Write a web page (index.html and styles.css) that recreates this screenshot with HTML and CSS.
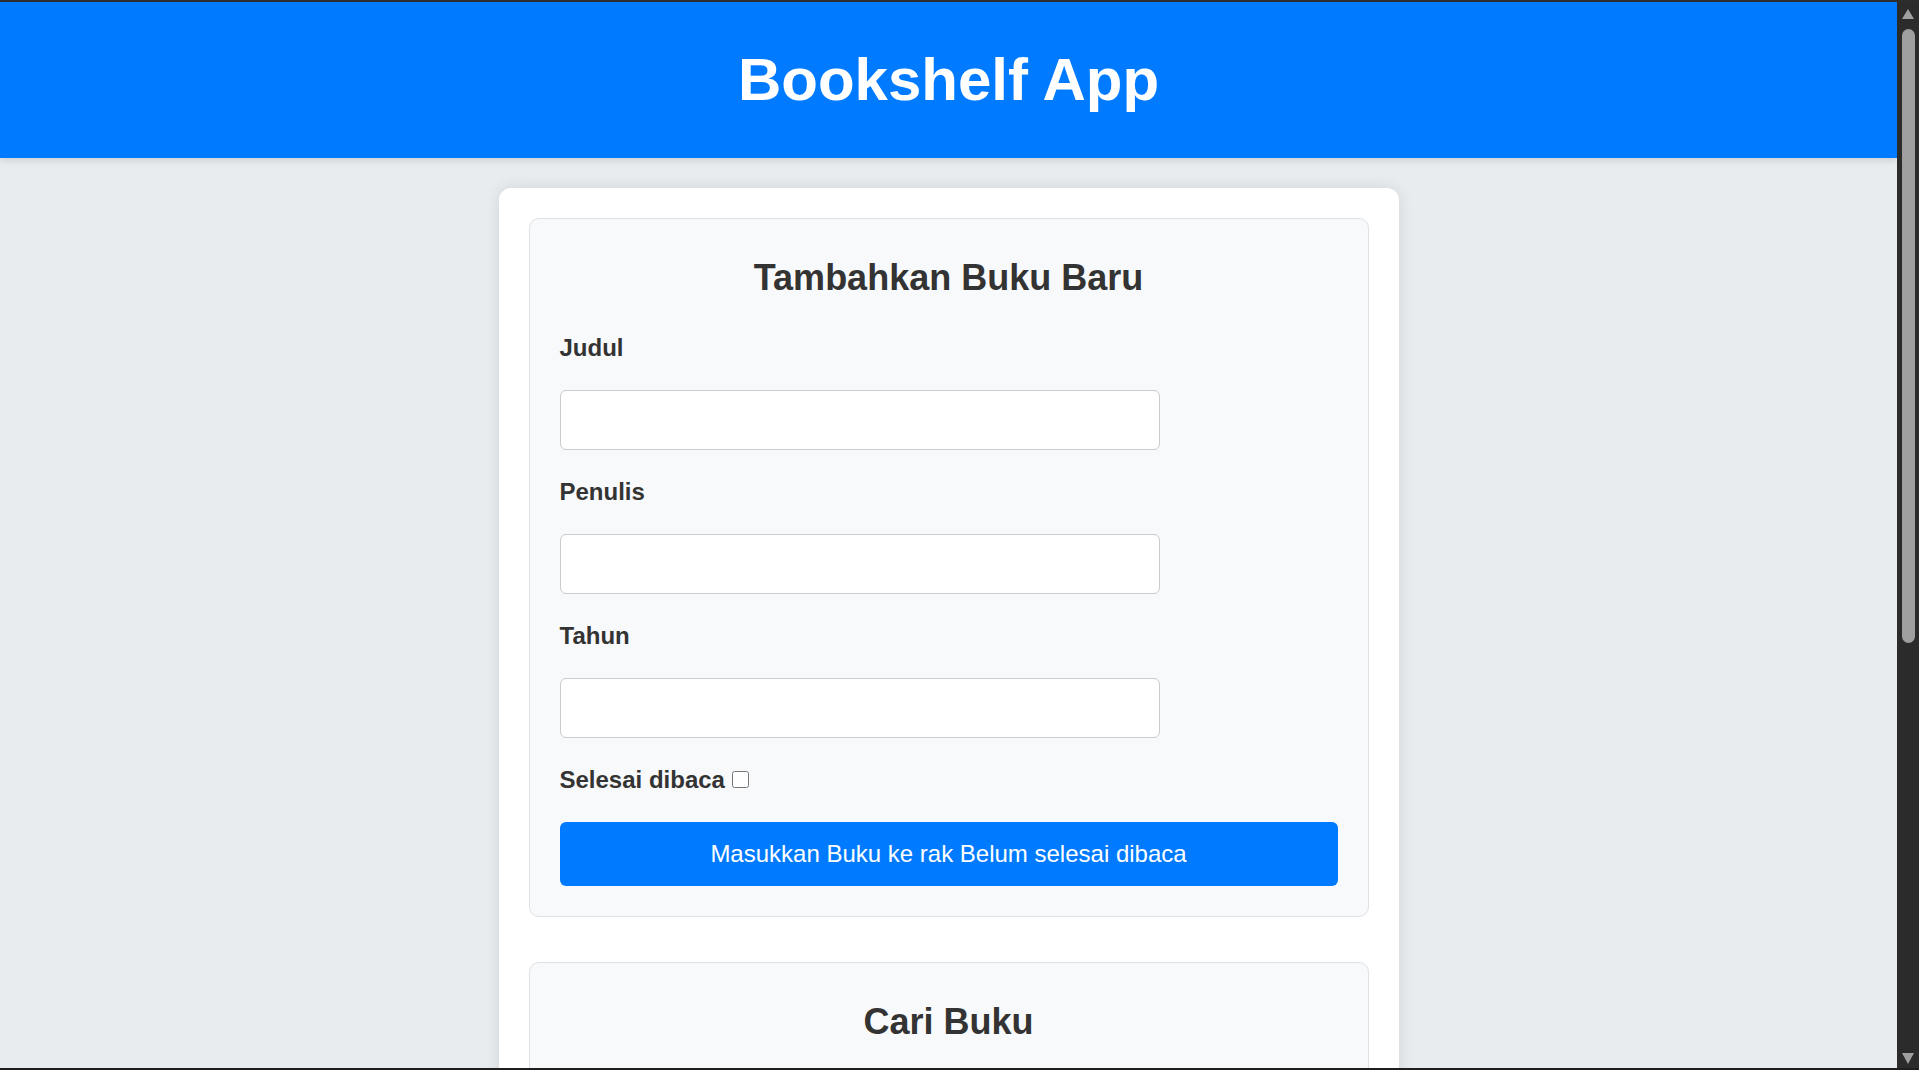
FILE: index.html
```html
<!DOCTYPE html>
<html lang="id">
<head>
<meta charset="utf-8">
<title>Bookshelf App</title>
<link rel="stylesheet" href="styles.css">
</head>
<body>
<div class="page">
  <header class="app-header">
    <h1 class="app-title">Bookshelf App</h1>
  </header>
  <main class="main">
    <div class="card">
      <section class="panel">
        <h2 class="panel-title">Tambahkan Buku Baru</h2>
        <form class="book-form">
          <div class="field">
            <label class="field-label" for="bookFormTitle">Judul</label>
            <input class="field-input" id="bookFormTitle" type="text">
          </div>
          <div class="field">
            <label class="field-label" for="bookFormAuthor">Penulis</label>
            <input class="field-input" id="bookFormAuthor" type="text">
          </div>
          <div class="field">
            <label class="field-label" for="bookFormYear">Tahun</label>
            <input class="field-input" id="bookFormYear" type="number">
          </div>
          <div class="field field-check">
            <label class="check-label" for="bookFormIsComplete">Selesai dibaca</label><input class="check-input" id="bookFormIsComplete" type="checkbox">
          </div>
          <button class="btn" type="submit">Masukkan Buku ke rak <span>Belum selesai dibaca</span></button>
        </form>
      </section>

      <section class="panel">
        <h2 class="panel-title">Cari Buku</h2>
        <form class="search-form">
          <div class="field">
            <label class="field-label" for="searchBookTitle">Judul</label>
            <input class="field-input" id="searchBookTitle" type="text">
          </div>
          <button class="btn" type="submit">Cari</button>
        </form>
      </section>

      <section class="panel">
        <h2 class="panel-title">Belum selesai dibaca</h2>
        <div class="book-list"></div>
      </section>

      <section class="panel">
        <h2 class="panel-title">Selesai dibaca</h2>
        <div class="book-list"></div>
      </section>
    </div>
  </main>
</div>
<div class="scrollbar" aria-hidden="true">
  <span class="sb-arrow sb-up"></span>
  <span class="sb-thumb"></span>
  <span class="sb-spacer"></span>
  <span class="sb-arrow sb-down"></span>
</div>
</body>
</html>
```

FILE: styles.css
```css
html {
  height: 100%;
  background: #2b2b2b;
}

body {
  margin: 0;
  height: 100vh;
  box-sizing: border-box;
  border-top: 2px solid #2d2d2d;
  border-bottom: 2px solid #1f1f1f;
  display: flex;
  overflow: hidden;
  color: #333;
  font-family: "Liberation Sans", Arial, sans-serif;
}

.page {
  flex: 1;
  min-width: 0;
  overflow-y: auto;
  scrollbar-width: none;
  background: #e9ecef;
}

.page::-webkit-scrollbar {
  display: none;
}

/* scrollbar column as seen in the screenshot */
.scrollbar {
  width: 22px;
  flex: none;
  box-sizing: border-box;
  padding: 7px 4px 4px 5px;
  background: #2b2b2b;
  display: flex;
  flex-direction: column;
}

.sb-arrow {
  display: block;
  width: 0;
  height: 0;
  border-left: 6.5px solid transparent;
  border-right: 6.5px solid transparent;
}

.sb-up {
  border-bottom: 10px solid #9f9f9f;
}

.sb-down {
  border-top: 11px solid #9f9f9f;
}

.sb-thumb {
  display: block;
  height: 614px;
  margin-top: 10px;
  border-radius: 6.5px;
  background: #9f9f9f;
}

.sb-spacer {
  flex: 1;
}

.app-header {
  background: #007bff;
  color: #fff;
  text-align: center;
  padding: 43px 0 44px;
  box-shadow: 0 3px 6px rgba(0, 0, 0, 0.1);
  position: relative;
}

.app-title {
  margin: 0;
  font-size: 60px;
  line-height: 69px;
  font-weight: 700;
}

.main {
  padding: 30px 0;
}

.card {
  width: 900px;
  box-sizing: border-box;
  margin: 0 auto;
  padding: 30px;
  background: #fff;
  border-radius: 12px;
  box-shadow: 0 0 15px rgba(0, 0, 0, 0.1);
}

.panel {
  background: #f8f9fa;
  border: 1px solid #dee2e6;
  border-radius: 10px;
  padding: 30px;
  margin-bottom: 45px;
}

.panel:last-child {
  margin-bottom: 0;
}

.panel-title {
  margin: 7.5px 0 35.5px;
  font-size: 36px;
  line-height: 42px;
  font-weight: 700;
  text-align: center;
}

.field {
  margin-bottom: 28px;
}

.field-label {
  display: block;
  font-size: 24px;
  line-height: 28px;
  font-weight: 700;
  margin-bottom: 28px;
}

.field-input {
  display: block;
  box-sizing: border-box;
  width: 600px;
  height: 60px;
  margin: 0;
  padding: 0 15px;
  border: 1px solid #ccc;
  border-radius: 6px;
  background: #fff;
  font-family: "Liberation Sans", Arial, sans-serif;
  font-size: 24px;
}

.field-check {
  font-size: 24px;
  line-height: 28px;
  font-weight: 700;
}

.check-label {
  font-weight: 700;
}

.check-input {
  width: 17px;
  height: 17px;
  margin: 0 0 2px 7px;
  vertical-align: baseline;
}

.btn {
  display: block;
  width: 100%;
  height: 64px;
  margin-top: 29px;
  padding: 0;
  border: none;
  border-radius: 6px;
  background: #007bff;
  color: #fff;
  font-family: "Liberation Sans", Arial, sans-serif;
  font-size: 24px;
  cursor: pointer;
}

.field + .btn {
  margin-top: 29px;
}

.field-check + .btn {
  margin-top: 1px;
}

.book-list {
  min-height: 0;
}
```
